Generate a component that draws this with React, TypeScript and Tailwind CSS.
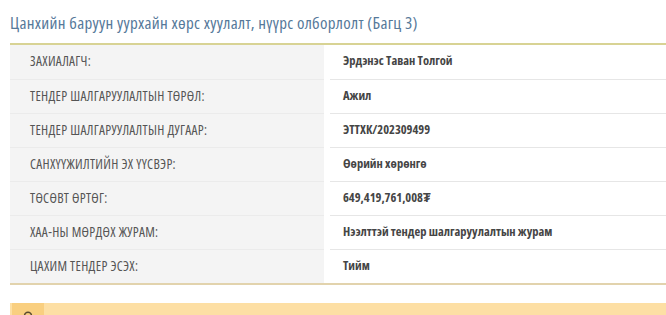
import React from "react";
import { Lightbulb } from "lucide-react";

const rows: [string, string][] = [
  ["ЗАХИАЛАГЧ:", "Эрдэнэс Таван Толгой"],
  ["ТЕНДЕР ШАЛГАРУУЛАЛТЫН ТӨРӨЛ:", "Ажил"],
  ["ТЕНДЕР ШАЛГАРУУЛАЛТЫН ДУГААР:", "ЭТТХК/202309499"],
  ["САНХҮҮЖИЛТИЙН ЭХ ҮҮСВЭР:", "Өөрийн хөрөнгө"],
  ["ТӨСӨВТ ӨРТӨГ:", "649,419,761,008₮"],
  ["ХАА-НЫ МӨРДӨХ ЖУРАМ:", "Нээлттэй тендер шалгаруулалтын журам"],
  ["ЦАХИМ ТЕНДЕР ЭСЭХ:", "Тийм"],
];

export default function App() {
  return (
    <div className="w-[666px] h-[315px] overflow-hidden bg-white font-['Open_Sans',sans-serif]">
      <div className="pl-[10px] w-[700px]">
        <h1 className="pt-[12px] h-[43px] text-[17px] leading-[22px] tracking-[0.3px] font-stretch-condensed text-[#56799a] whitespace-nowrap">
          Цанхийн баруун уурхайн хөрс хуулалт, нүүрс олборлолт (Багц 3)
        </h1>
        <div className="border-t-2 border-[#d8d394] border-b-2 border-b-[#e2d3ad]">
          {rows.map(([label, value], i) => (
            <div key={i} className="flex h-[34px]">
              <div
                className={`w-[314px] bg-[#f4f4f4] pl-[20px] pb-[1px] flex items-center text-[13.5px] tracking-[0.3px] font-stretch-condensed text-[#555] ${
                  i > 0 ? "border-t border-[#ebebeb]" : ""
                }`}
              >
                {label}
              </div>
              <div
                className={`flex-1 ml-[6px] pl-[13px] pb-[1px] flex items-center text-[12.5px] font-bold font-stretch-condensed text-[#454545] ${
                  i > 0 ? "border-t border-[#e6e6e6]" : ""
                }`}
              >
                {value}
              </div>
            </div>
          ))}
        </div>
        <div className="mt-[18px] h-[40px] bg-[#fddfa4] flex">
          <div className="ml-[2px] w-[32px] h-[40px] bg-[#f9cf80] flex justify-center pt-[8px]">
            <Lightbulb size={14} strokeWidth={2.5} className="text-[#5a4a30]" />
          </div>
        </div>
      </div>
    </div>
  );
}
